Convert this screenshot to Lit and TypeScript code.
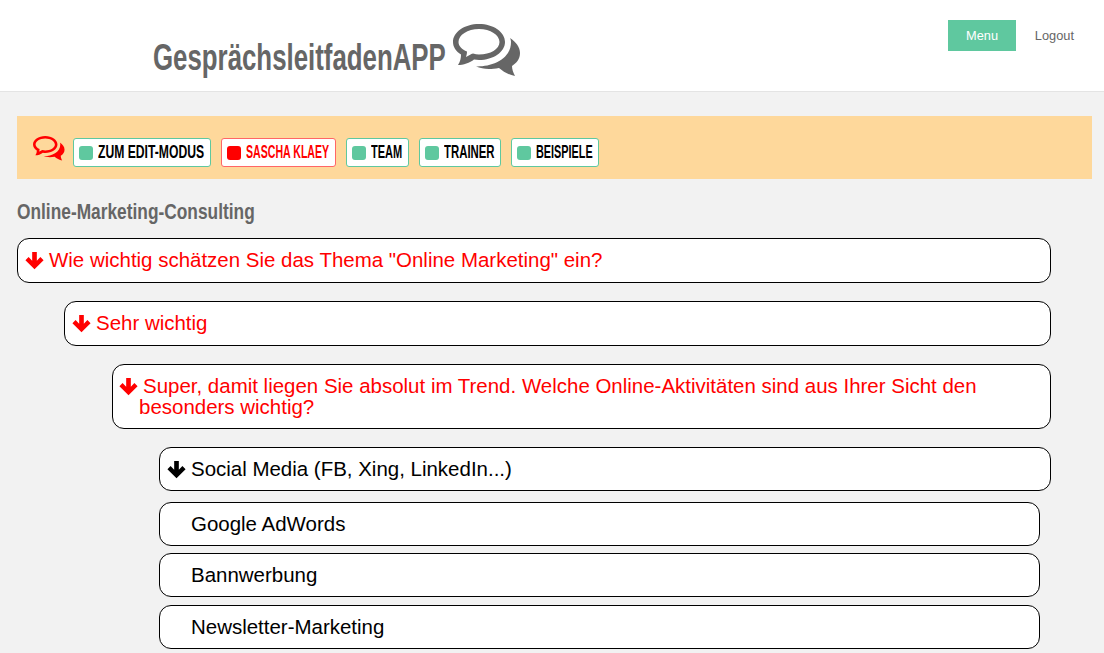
import { LitElement, html, css, svg } from "lit";
import { customElement } from "lit/decorators.js";
import { styleMap } from "lit/directives/style-map.js";

const bubbles = (fill: string) => svg`<svg class="bub" viewBox="0 0 68 53" xmlns="http://www.w3.org/2000/svg">
  <path fill="${fill}" fill-rule="evenodd" d="M26 0C11.600 0 0 8 0 18C0 23 3 27.500 8 30.500C8 34 7.500 37 5 41C10 41 17 39 21 35.500C23 35.800 24.500 36 26 36C40.400 36 52 28 52 18C52 8 40.400 0 26 0ZM26 5C14.500 5 5.500 11 5.500 18C5.500 22 9 25.500 14 27.500C14 29.500 13.500 31.500 13 33C15.500 32 18 30 20 29.500C22 30 24 30.500 26 30.500C37.500 30.500 46.500 25 46.500 18C46.500 11 37.500 5 26 5Z"/>
  <path fill="${fill}" d="M57 14C63 18 67 23 67 29C67 35 63.500 39 59 42C59 45 60 48 62 52C56 51 50 47.500 46 44C42 44.700 39 45 36 45C31 45 27 44 23 42.500C38 43 58 36 58 18C58 16.500 57.500 15 57 14Z"/>
</svg>`;

const arrow = svg`<svg class="arr" viewBox="0 0 18 18" xmlns="http://www.w3.org/2000/svg"><path fill="currentColor" d="M6.800 1h4.400v8.200L14.600 5.800 17.600 8.800 9 17.400 .4 8.800 3.400 5.800 6.800 9.200z"/></svg>`;

const tags = [
  { label: "ZUM EDIT-MODUS", w: 106, s: 0.695, red: false },
  { label: "SASCHA KLAEY", w: 83, s: 0.605, red: true },
  { label: "TEAM", w: 31.4, s: 0.63, red: false },
  { label: "TRAINER", w: 50, s: 0.65, red: false },
  { label: "BEISPIELE", w: 56, s: 0.62, red: false },
];

@customElement("app-root")
export class AppRoot extends LitElement {
  static styles = css`
    :host { display: block; height: 653px; overflow: hidden; background: #f2f2f2; font-family: "Liberation Sans", Arial, sans-serif; }
    .head { height: 91px; background: #fff; border-bottom: 1px solid #e4e4e4; display: flex; justify-content: space-between; }
    .logo { display: flex; align-items: flex-start; margin-left: 153px; padding-top: 24px; gap: 7px; }
    .logo-t { font-weight: 700; font-size: 37px; line-height: 44px; color: #666; margin-top: 12px; width: 293px; white-space: nowrap; display: block; transform-origin: left center; transform: scaleX(.698); }
    .logo .bub { width: 68px; height: 53px; }
    .nav { display: flex; align-items: flex-start; padding-top: 20px; padding-right: 30px; font-size: 12.800px; }
    .menu { width: 68px; height: 31px; background: #5fc89f; color: #fff; display: flex; align-items: center; justify-content: center; }
    .logout { width: 58px; height: 31px; display: flex; align-items: center; justify-content: flex-end; color: #666; }
    .banner { margin: 24px 12px 0 17px; height: 63px; background: #fed89b; display: flex; align-items: center; padding-left: 16px; gap: 10px; }
    .banner .bub { width: 32px; height: 25px; margin: 2px -2px 0 0; }
    .tag { height: 29px; margin-top: 10px; box-sizing: border-box; border: 1px solid #5fc89f; border-radius: 3px; background: #fff; display: flex; align-items: center; padding: 0 6px 0 5px; gap: 5px; color: #000; font-weight: 700; font-size: 17.500px; white-space: nowrap; }
    .tag i { width: 14px; height: 14px; border-radius: 3px; background: #5fc89f; flex: none; }
    .tag span { display: block; transform-origin: left center; }
    .tag.red { border-color: #f66; color: #f00; }
    .tag.red i { background: #f00; }
    h2 { margin: 20px 0 0 17px; height: 26px; font-weight: 700; font-size: 22.500px; line-height: 26px; color: #666; white-space: nowrap; transform-origin: left center; transform: scaleX(.77); }
    .list { margin-top: 13px; display: flex; flex-direction: column; align-items: flex-start; }
    .it { box-sizing: border-box; background: #fff; border: 1px solid #000; border-radius: 12px; font-size: 20.480px; line-height: 21px; padding: 10px 8px 10px 7px; color: #000; display: block; }
    .it.red { color: #f00; }
    .it .arr { width: 19px; height: 19px; vertical-align: -3px; margin-right: 5px; }
    .l0 { margin-left: 17px; width: 1034px; height: 45px; margin-bottom: 18px; }
    .l1 { margin-left: 64px; width: 987px; height: 45px; margin-bottom: 18px; }
    .l2 { margin-left: 112px; width: 939px; height: 65px; margin-bottom: 18px; padding: 10px 60px 10px 26px; text-indent: -20px; }
    .l3 { margin-left: 159px; width: 892px; height: 44px; margin-bottom: 11px; }
    .l4 { margin-left: 159px; width: 881px; height: 44px; padding: 10px 8px 9px 31px; margin-bottom: 7.400px; }
  `;

  render() {
    return html`
      <div class="head">
        <div class="logo"><span class="logo-t">GesprächsleitfadenAPP</span>${bubbles("#666")}</div>
        <div class="nav"><div class="menu">Menu</div><div class="logout">Logout</div></div>
      </div>
      <div class="banner">
        ${bubbles("#f00")}
        ${tags.map((t) => html`<div class="tag ${t.red ? "red" : ""}"><i></i><span style=${styleMap({ width: t.w + "px", transform: `scaleX(${t.s})` })}>${t.label}</span></div>`)}
      </div>
      <h2>Online-Marketing-Consulting</h2>
      <div class="list">
        <div class="it red l0">${arrow}Wie wichtig schätzen Sie das Thema "Online Marketing" ein?</div>
        <div class="it red l1">${arrow}Sehr wichtig</div>
        <div class="it red l2">${arrow}Super, damit liegen Sie absolut im Trend. Welche Online-Aktivitäten sind aus Ihrer Sicht den besonders wichtig?</div>
        <div class="it l3">${arrow}Social Media (FB, Xing, LinkedIn...)</div>
        <div class="it l4">Google AdWords</div>
        <div class="it l4">Bannwerbung</div>
        <div class="it l4">Newsletter-Marketing</div>
      </div>`;
  }
}
